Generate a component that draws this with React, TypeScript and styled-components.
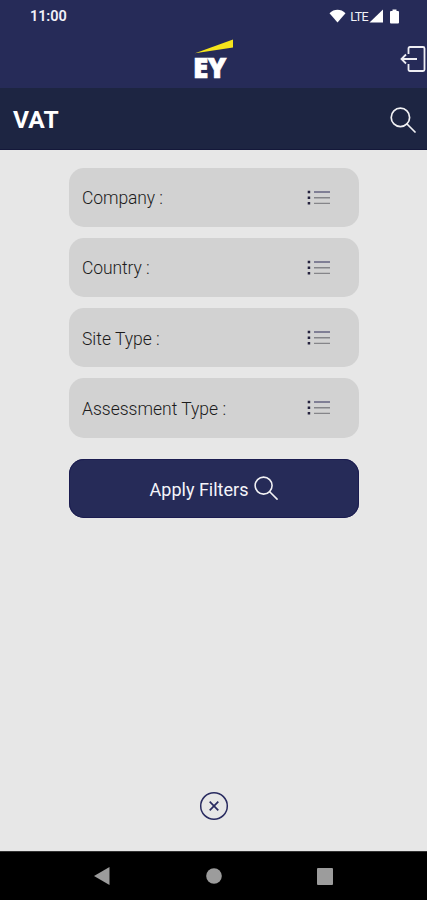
import React from "react";
import styled, { createGlobalStyle } from "styled-components";

const GlobalStyle = createGlobalStyle`
  * { box-sizing: border-box; }
  body { margin: 0; background: #e7e7e7; font-family: Roboto, "Liberation Sans", sans-serif; }
  svg { display: block; flex: none; }
`;

const Screen = styled.div`
  width: 427px;
  height: 900px;
  display: flex;
  flex-direction: column;
  overflow: hidden;
  background: #e7e7e7;
`;

const StatusBar = styled.div`
  height: 32px;
  padding: 0 28px 0 30px;
  display: flex;
  align-items: center;
  justify-content: space-between;
  background: #262b58;
  color: #f2f2f8;
`;

const Clock = styled.span`
  padding-top: 2px;
  font-size: 14.5px;
  font-weight: 600;
  line-height: 30px;
  letter-spacing: -0.1px;
`;

const StatusIcons = styled.div`
  display: flex;
  align-items: center;
`;

const Network = styled.span`
  margin: 0 1px 0 4px;
  font-size: 12.5px;
  letter-spacing: -0.6px;
`;

const Header = styled.header`
  height: 56px;
  display: grid;
  grid-template-columns: 1fr 42px 1fr;
  padding-right: 1px;
  background: #262b58;
`;

const Logo = styled.div`
  grid-column: 2;
  padding: 7px 0 0 2px;
  color: #fff;
`;

const LogoText = styled.div`
  margin-top: -1px;
  margin-left: -1px;
  font: 800 28px/29px "Open Sans", sans-serif;
  letter-spacing: -0.6px;
  -webkit-text-stroke: 0.7px #fff;
`;

const ExitButton = styled.button`
  justify-self: end;
  align-self: start;
  margin-top: 13px;
  padding: 0;
  border: 0;
  background: none;
`;

const TitleBar = styled.div`
  height: 62px;
  padding: 2px 11px 0 13px;
  display: flex;
  align-items: center;
  justify-content: space-between;
  background: #1d2542;
  border-bottom: 1px solid #14183a;
`;

const Title = styled.h1`
  margin: 0;
  font: 700 24.5px/28px Roboto, sans-serif;
  letter-spacing: 0.2px;
  color: #fff;
`;

const Content = styled.main`
  flex: 1;
  display: flex;
  flex-direction: column;
  align-items: center;
  padding: 17.5px 0 30px;
`;

const Filters = styled.div`
  width: 290px;
  margin-left: 1px;
  display: flex;
  flex-direction: column;
  gap: 10.7px;
`;

const FilterRow = styled.div`
  height: 59.5px;
  padding: 1px 28px 0 13px;
  display: flex;
  align-items: center;
  justify-content: space-between;
  border-radius: 15px;
  background: #d2d2d2;
`;

const Label = styled.span<{ $spacing: number }>`
  padding-top: 1px;
  font-size: 17.5px;
  font-weight: 300;
  letter-spacing: ${(p) => p.$spacing}px;
  color: #1c1c1c;
`;

const ApplyButton = styled.button`
  width: 290px;
  height: 59px;
  margin: 21.5px 0 0 1px;
  padding: 1px 0 0;
  display: flex;
  align-items: center;
  justify-content: center;
  gap: 6px;
  border: 0;
  border-radius: 15px;
  background: #262b58;
  box-shadow: inset 0 0 0 1px #1b1c50;
  color: #f4f4fa;
  font: 400 18px Roboto, sans-serif;
`;

const ButtonIcon = styled.span`
  padding-bottom: 2px;
`;

const CloseButton = styled.button`
  margin: auto 0 0 1px;
  padding: 0;
  border: 0;
  background: none;
`;

const NavBar = styled.nav`
  height: 49px;
  padding: 0 94px;
  display: flex;
  align-items: center;
  justify-content: space-between;
  background: #000;
  border-top: 1px solid #333;
`;

const SearchIcon = ({ size }: { size: number }) => (
  <svg width={size} height={size} viewBox="0 0 26 26" fill="none" stroke="#f1f1f4" strokeWidth="1.7" strokeLinecap="round">
    <circle cx="10.4" cy="10.4" r="9.2" />
    <path d="M17 17l8 8" />
  </svg>
);

const ListIcon = () => (
  <svg width="24" height="16" viewBox="0 0 24 16">
    <path d="M.7.7h2.5v2.5H.7zM.7 6.4h2.500v2.500H.7zM.7 12.100h2.500v2.500H.7z" fill="#25233f" />
    <path d="M7 2h16" stroke="#5d5c7c" strokeWidth="1.400" />
    <path d="M7 7.700h16M7 13.400h16" stroke="#858589" strokeWidth="1.400" />
  </svg>
);

const filters = [
  { name: "Company :", spacing: -0.1 },
  { name: "Country :", spacing: -0.1 },
  { name: "Site Type :", spacing: 0 },
  { name: "Assessment Type :", spacing: 0 },
];

export default function App() {
  return (
    <Screen>
      <GlobalStyle />
      <StatusBar>
        <Clock>11:00</Clock>
        <StatusIcons>
          <svg width="17" height="14" viewBox="0 0 17 14" fill="#fff">
            <path d="M.5 4.2C5-.4 12-.4 16.5 4.2L8.5 13.500z" />
          </svg>
          <Network>LTE</Network>
          <svg width="15" height="14" viewBox="0 0 15 14" fill="#fff"><path d="M14 .5v13H.5z" /></svg>
          <svg width="15" height="15" viewBox="0 0 15 15" fill="#fff">
            <path d="M8.500.5h4V2H14q1 0 1 1v10.500q0 1-1 1H7q-1 0-1-1V3q0-1 1-1h1.500z" />
          </svg>
        </StatusIcons>
      </StatusBar>
      <Header>
        <Logo>
          <svg width="40" height="15" viewBox="0 0 40 15"><path d="M1 14.200L39 .5v8z" fill="#f6e51c" /></svg>
          <LogoText>EY</LogoText>
        </Logo>
        <ExitButton aria-label="Log out">
          <svg width="26" height="28" viewBox="0 0 26 28" fill="none" stroke="#eeeef4" strokeWidth="1.800">
            <path d="M8.500 9V3.500q0-1.500 1.500-1.500h13q1.500 0 1.500 1.500v21q0 1.500-1.500 1.500H10q-1.500 0-1.500-1.500V19M17 14H1.500M6 9.500L1.500 14L6 18.500" />
          </svg>
        </ExitButton>
      </Header>
      <TitleBar>
        <Title>VAT</Title>
        <SearchIcon size={26} />
      </TitleBar>
      <Content>
        <Filters>
          {filters.map((f) => (
            <FilterRow key={f.name}>
              <Label $spacing={f.spacing}>{f.name}</Label>
              <ListIcon />
            </FilterRow>
          ))}
        </Filters>
        <ApplyButton>
          Apply Filters
          <ButtonIcon>
            <SearchIcon size={24} />
          </ButtonIcon>
        </ApplyButton>
        <CloseButton aria-label="Close">
          <svg width="30" height="30" viewBox="0 0 30 30" fill="none" stroke="#292b60">
            <circle cx="15" cy="15" r="13.300" strokeWidth="1.500" />
            <path d="M10.700 10.700l8.600 8.600M19.300 10.700l-8.600 8.600" strokeWidth="1.700" />
          </svg>
        </CloseButton>
      </Content>
      <NavBar>
        <svg width="16" height="18" viewBox="0 0 16 18" fill="#9c9c9c"><path d="M0 9L15.500 0v18z" /></svg>
        <svg width="16" height="16" viewBox="0 0 16 16" fill="#9c9c9c"><circle cx="8" cy="8" r="7.800" /></svg>
        <svg width="16" height="17" viewBox="0 0 16 17" fill="#9c9c9c"><rect width="16" height="17" rx="1" /></svg>
      </NavBar>
    </Screen>
  );
}
